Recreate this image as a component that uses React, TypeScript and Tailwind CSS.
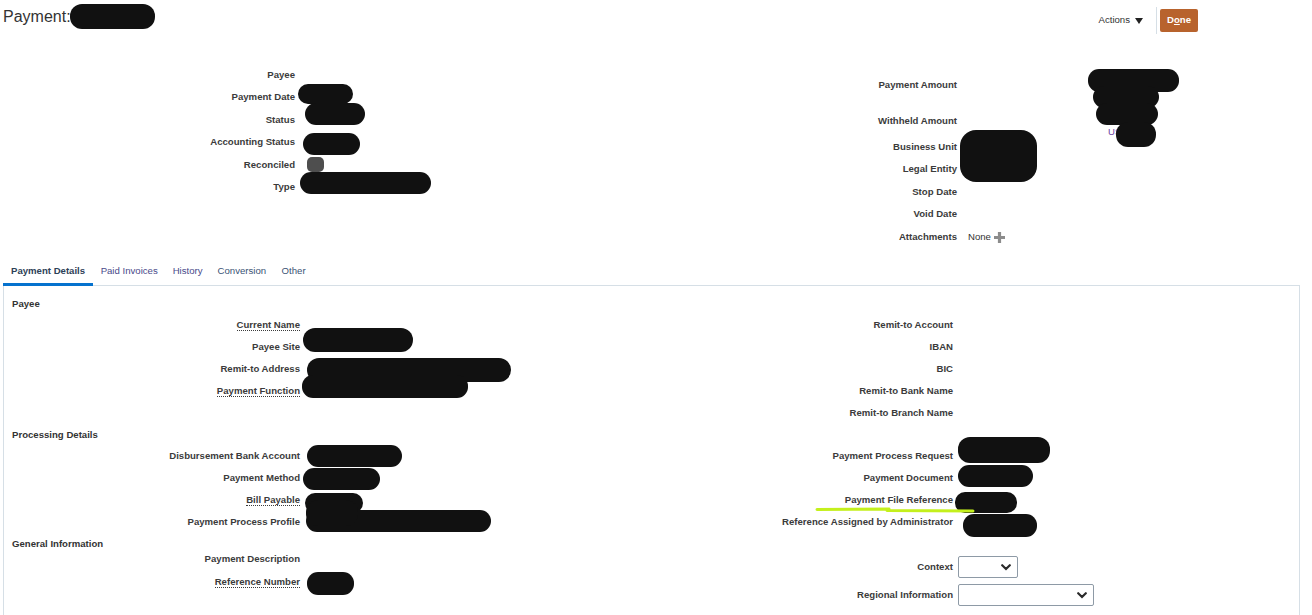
import type { ReactNode } from "react";

type Field = { label: string; dotted?: boolean };

const payeeLeft: Field[] = [
  { label: "Current Name", dotted: true },
  { label: "Payee Site" },
  { label: "Remit-to Address" },
  { label: "Payment Function", dotted: true },
];

const payeeRight: Field[] = [
  { label: "Remit-to Account" },
  { label: "IBAN" },
  { label: "BIC" },
  { label: "Remit-to Bank Name" },
  { label: "Remit-to Branch Name" },
];

const processingLeft: Field[] = [
  { label: "Disbursement Bank Account" },
  { label: "Payment Method" },
  { label: "Bill Payable", dotted: true },
  { label: "Payment Process Profile" },
];

const processingRight: Field[] = [
  { label: "Payment Process Request" },
  { label: "Payment Document" },
  { label: "Payment File Reference" },
  { label: "Reference Assigned by Administrator" },
];

// redaction scribbles sitting on top of the screenshot: [left, top, width, height, radius]
const blobs: [number, number, number, number, number][] = [
  [70, 4, 85, 25, 12],
  [298, 84, 55, 20, 10],
  [305, 103, 60, 22, 11],
  [303, 133, 57, 22, 11],
  [300, 172, 131, 22, 11],
  [1088, 69, 91, 23, 11],
  [1093, 86, 66, 22, 11],
  [1096, 103, 62, 22, 11],
  [1116, 122, 40, 25, 12],
  [960, 130, 77, 52, 16],
  [303, 328, 110, 24, 12],
  [307, 358, 204, 24, 12],
  [302, 375, 166, 23, 11],
  [307, 445, 95, 22, 11],
  [303, 468, 77, 22, 11],
  [305, 493, 58, 20, 10],
  [306, 510, 185, 22, 11],
  [306, 500, 52, 26, 12],
  [958, 437, 92, 26, 12],
  [958, 465, 75, 22, 11],
  [955, 492, 62, 21, 10],
  [963, 514, 74, 23, 11],
  [307, 572, 47, 23, 11],
];

function Label({ field }: { field: Field }) {
  return (
    <span
      className={
        field.dotted
          ? "inline-block border-b border-dotted border-[#3b3b3b] leading-[11px]"
          : "inline-block leading-[11px]"
      }
    >
      {field.label}
    </span>
  );
}

function Rows({ fields, labelW, h, children }: { fields: Field[]; labelW: string; h: string; children?: ReactNode }) {
  return (
    <div className="flex flex-col">
      {fields.map((f) => (
        <div key={f.label} className={`flex items-center ${h}`}>
          <div className={`${labelW} flex-none text-right`}>
            <Label field={f} />
          </div>
        </div>
      ))}
      {children}
    </div>
  );
}

function SelectBox({ w }: { w: string }) {
  return (
    <div className={`${w} flex h-[22px] items-center justify-end rounded-[2px] border border-[#8e9aa6] bg-white pr-[6px]`}>
      <svg width="10" height="7" viewBox="0 0 10 7">
        <path d="M1.2 1.2 L5 5 L8.8 1.2" fill="none" stroke="#2b2b2b" strokeWidth="2.2" strokeLinecap="round" />
      </svg>
    </div>
  );
}

export default function App() {
  return (
    <div className="relative h-[615px] w-full overflow-hidden bg-white font-['Liberation_Sans',Arial,sans-serif] text-[9.6px] text-[#3b3b3b]">
      {/* top bar */}
      <div className="flex h-[40px] justify-between">
        <div className="pl-[3px] pt-[9px] text-[16px] leading-[16px] text-[#333]">Payment:</div>
        <div className="mr-[114px] mt-[7px] flex h-[27px] items-center">
          <span className="text-[#333]">Actions</span>
          <svg className="ml-[5px]" width="8" height="6" viewBox="0 0 8 6">
            <path d="M0 0 H8 L4 6 Z" fill="#222" />
          </svg>
          <div className="ml-[13px] h-[27px] w-px bg-[#d6dfe6]" />
          <button className="ml-[3px] h-[23px] w-[38px] rounded-[2px] bg-[#b8632d] text-[9.6px] font-bold text-white">
            D<span className="underline">o</span>ne
          </button>
        </div>
      </div>

      {/* header form */}
      <div className="flex h-[218px] font-bold">
        <div className="w-[660px] flex-none pt-[24px]">
          {["Payee", "Payment Date", "Status", "Accounting Status", "Reconciled", "Type"].map((l) => (
            <div key={l} className="flex h-[22.4px] items-center">
              <div className="w-[295px] text-right">{l}</div>
            </div>
          ))}
        </div>
        <div className="pt-[33.75px]">
          <div className="flex h-[22.5px] items-center">
            <div className="w-[297px] text-right">Payment Amount</div>
          </div>
          <div className="mt-[13.5px] flex h-[22.5px] items-center">
            <div className="w-[297px] text-right">Withheld Amount</div>
          </div>
          {["Business Unit", "Legal Entity", "Stop Date", "Void Date"].map((l, i) => (
            <div key={l} className={`flex h-[22.5px] items-center ${i === 0 ? "mt-[3.5px]" : ""}`}>
              <div className="w-[297px] text-right">{l}</div>
            </div>
          ))}
          <div className="flex h-[22.5px] items-center">
            <div className="w-[297px] text-right">Attachments</div>
            <span className="ml-[11px] font-normal text-[#333]">None</span>
            <svg className="ml-[2px]" width="13" height="13" viewBox="0 0 13 13">
              <path d="M6.5 1 V12 M1 6.5 H12" stroke="#8c8c8c" strokeWidth="3.2" />
            </svg>
          </div>
        </div>
      </div>

      {/* tabs */}
      <div className="ml-[3px] w-[1297px] border-b border-[#d6dfe6]">
        <div className="-mb-px flex h-[28px]">
          <div className="h-[28px] border-b-[3px] border-[#0572ce] px-[8px] pt-[7px] font-bold leading-[12px] text-[#2d4157]">
            Payment Details
          </div>
          <div className="px-[7.5px] pt-[7px] leading-[12px] text-[#4a4a8a]">Paid Invoices</div>
          <div className="px-[7.5px] pt-[7px] leading-[12px] text-[#4a4a8a]">History</div>
          <div className="px-[7.5px] pt-[7px] leading-[12px] text-[#3a5274]">Conversion</div>
          <div className="px-[8px] pt-[7px] leading-[12px] text-[#3a5274]">Other</div>
        </div>
      </div>

      {/* panel */}
      <div className="ml-[3px] h-[330px] w-[1297px] border-x border-[#d6dfe6] font-bold">
        <div className="pl-[8px] pt-[12px] leading-[12px] text-[#333]">Payee</div>
        <div className="mt-[4px] flex">
          <div className="w-[650px] flex-none">
            <Rows fields={payeeLeft} labelW="w-[296px]" h="h-[22px]" />
          </div>
          <Rows fields={payeeRight} labelW="w-[299px]" h="h-[22px]" />
        </div>

        <div className="mt-[5px] pl-[8px] leading-[12px] text-[#333]">Processing Details</div>
        <div className="mt-[4px] flex">
          <div className="w-[650px] flex-none">
            <Rows fields={processingLeft} labelW="w-[296px]" h="h-[22px]" />
          </div>
          <Rows fields={processingRight} labelW="w-[299px]" h="h-[22px]" />
        </div>

        <div className="mt-[5px] pl-[8px] leading-[12px] text-[#333]">General Information</div>
        <div className="-mt-[2px] flex">
          <div className="w-[650px] flex-none">
            <Rows
              fields={[{ label: "Payment Description" }, { label: "Reference Number", dotted: true }]}
              labelW="w-[296px]"
              h="h-[23px]"
            />
          </div>
          <div className="flex flex-col gap-[6px] pt-[8px]">
            <div className="flex h-[22px] items-center">
              <div className="w-[299px] text-right">Context</div>
              <div className="ml-[5px]">
                <SelectBox w="w-[60px]" />
              </div>
            </div>
            <div className="flex h-[22px] items-center">
              <div className="w-[299px] text-right">Regional Information</div>
              <div className="ml-[5px]">
                <SelectBox w="w-[136px]" />
              </div>
            </div>
          </div>
        </div>
      </div>

      {/* overlays: redaction marks, highlighter stroke */}
      <div className="pointer-events-none absolute inset-0">
        <span className="absolute left-[1108px] top-[125px] text-[9.6px] text-[#6a3fa3]">US</span>
        {blobs.map(([x, y, w, h, r], i) => (
          <div
            key={i}
            className="absolute bg-[#111]"
            style={{ left: x, top: y, width: w, height: h, borderRadius: r }}
          />
        ))}
        <div className="absolute left-[307px] top-[157px] h-[15px] w-[17px] rounded-[5px] bg-[#222] opacity-80" />
        <svg className="absolute left-0 top-0" width="1312" height="615">
          <path d="M817 509.5 L889 509 M887 510.5 L973 511" stroke="#c4f01c" strokeWidth="3" strokeLinecap="round" fill="none" />
        </svg>
      </div>
    </div>
  );
}
